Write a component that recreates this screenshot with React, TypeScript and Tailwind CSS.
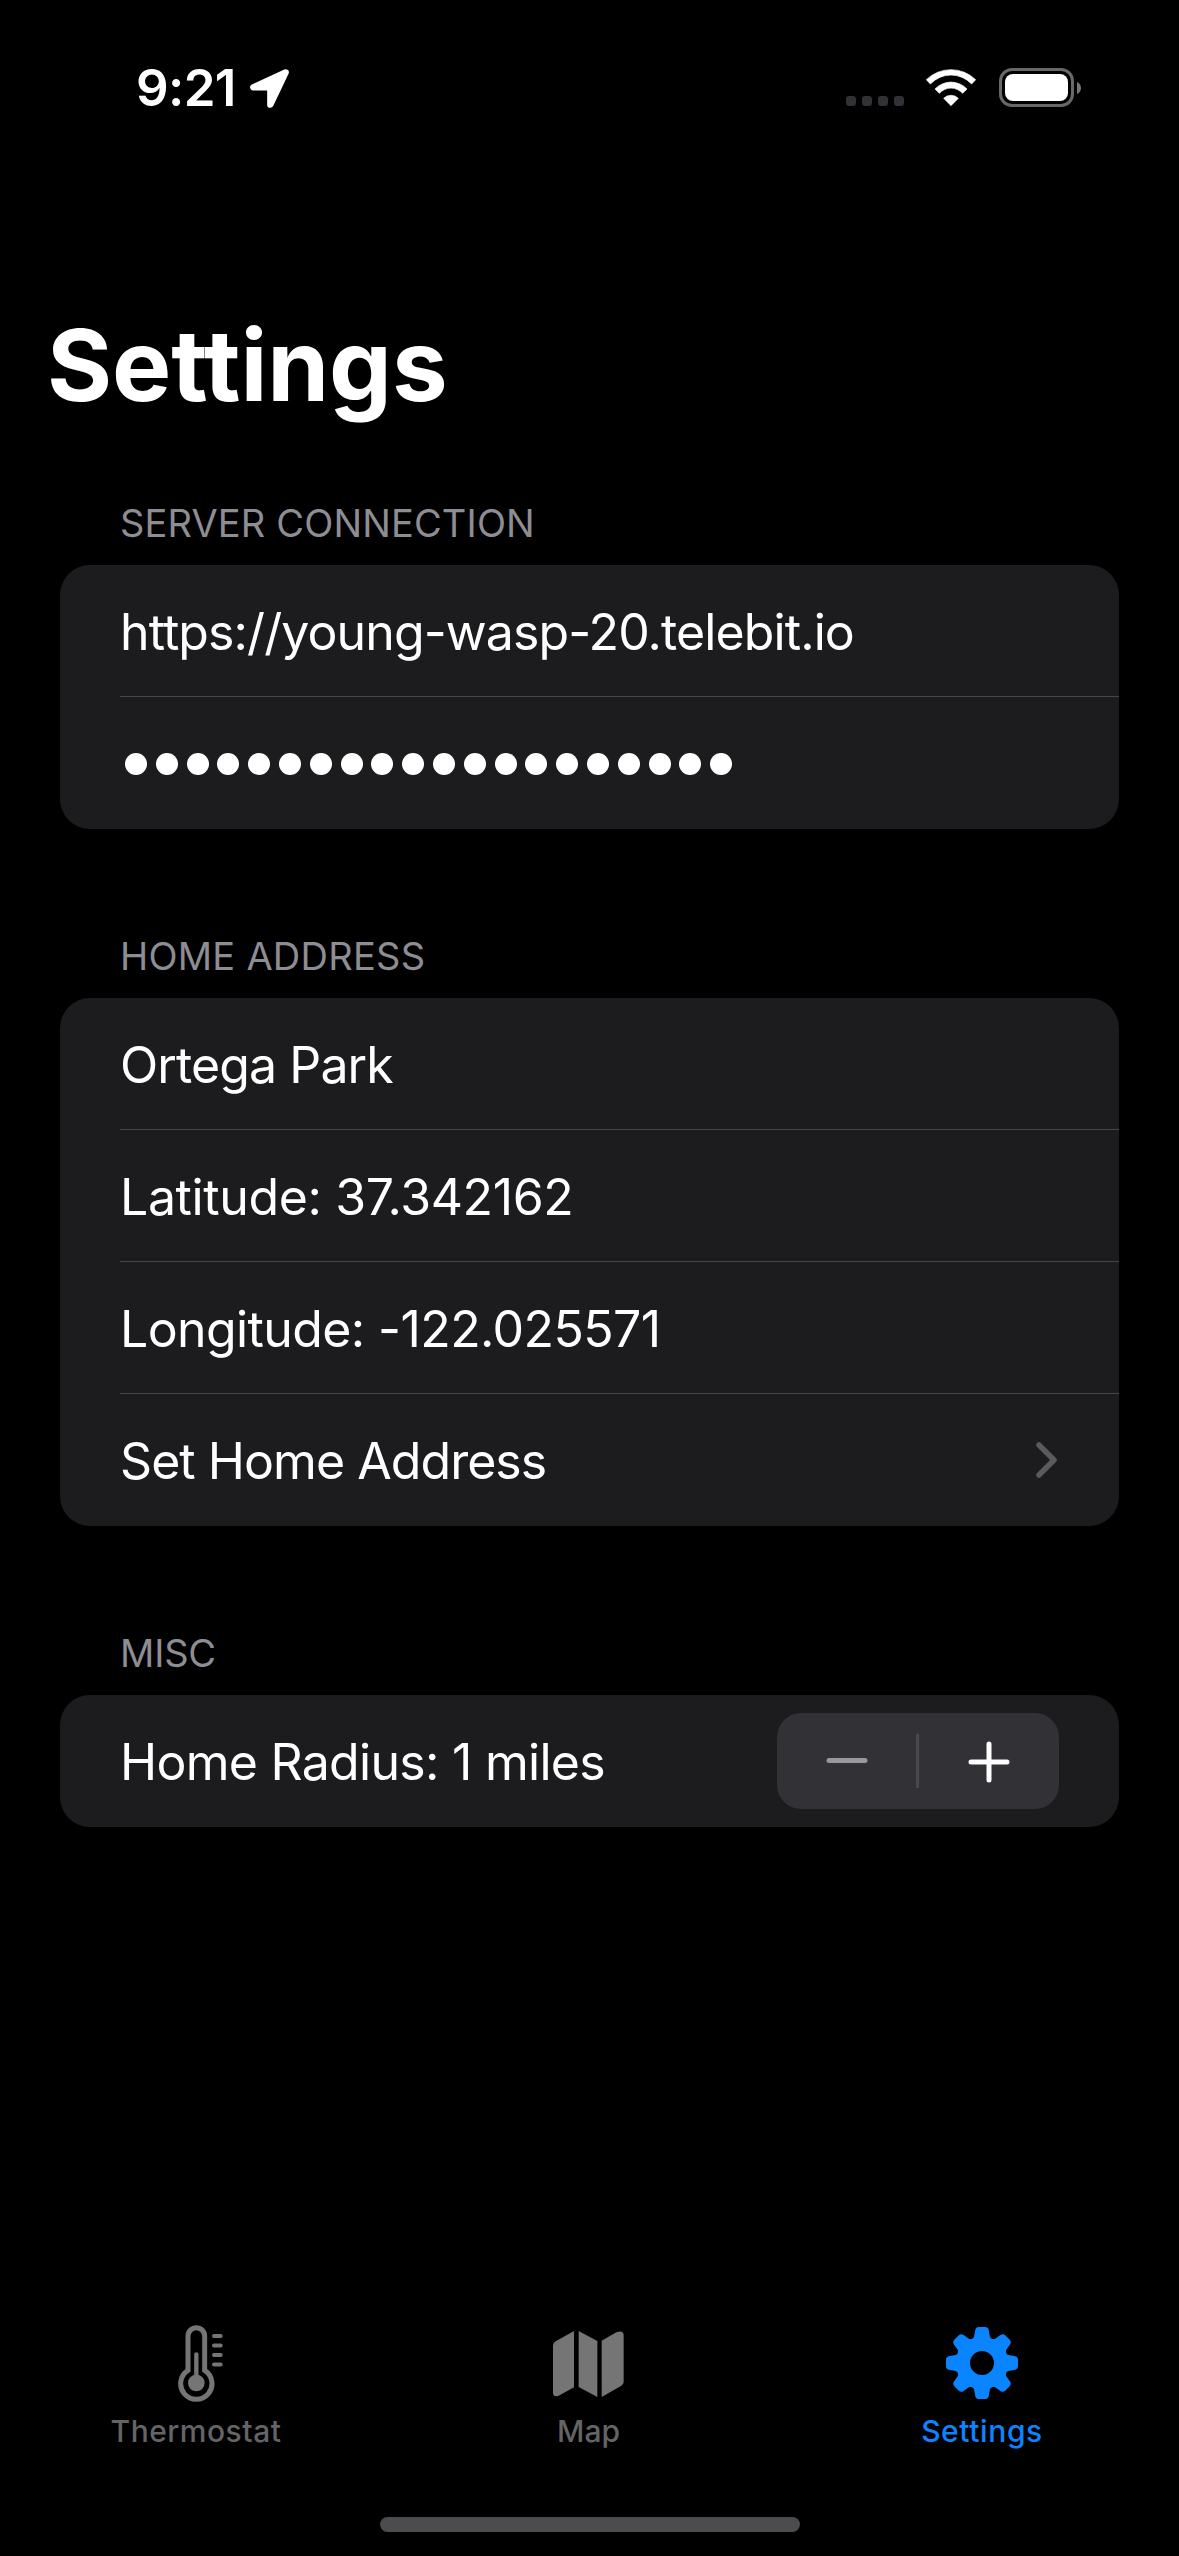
import type { ReactNode } from "react";

function LocationArrow() {
  return (
    <svg viewBox="0 0 117 117" className="ml-[14px] h-[39px] w-[39px] shrink-0">
      <path d="M107 10 L10 55 H61 V107 Z" fill="#fff" stroke="#fff" strokeWidth="19" strokeLinejoin="round" />
    </svg>
  );
}

function WifiIcon() {
  return (
    <svg viewBox="0 0 150 111" className="h-[37px] w-[50px]" fill="#fff" stroke="#fff" strokeWidth="2" strokeLinejoin="round">
      <path d="M1 32 A106 106 0 0 1 149 32 L137 45 A85 85 0 0 0 13 45 Z" />
      <path d="M27 60 A66 66 0 0 1 123 60 L110 73 A47 47 0 0 0 40 73 Z" />
      <path d="M53 88 A31 31 0 0 1 97 88 L75 110 Z" />
    </svg>
  );
}

function Battery() {
  return (
    <div className="flex items-center">
      <div className="h-[39px] w-[75px] rounded-[13px] border-[3px] border-[#68686b] p-[3px]">
        <div className="h-full w-full rounded-[8px] bg-white" />
      </div>
      <svg viewBox="0 0 4 12" className="ml-[3px] h-[12px] w-[4px]">
        <path d="M0 0 C5.3 2 5.3 10 0 12 Z" fill="#77777a" />
      </svg>
    </div>
  );
}

function StatusBar() {
  return (
    <div className="flex h-[176px] items-start">
      <div className="ml-[136px] mt-[57px] flex h-[62px] items-center">
        <span className="text-[51px] font-semibold leading-[62px] tracking-[-0.6px]">9:21</span>
        <LocationArrow />
      </div>
      <div className="ml-auto mr-[98px] mt-[68px] flex h-[39px] items-center">
        <div className="mr-[22px] mt-[27px] flex gap-[6px]">
          {[0, 1, 2, 3].map((i) => (
            <span key={i} className="h-[10px] w-[10px] rounded-[3px] bg-[#313136]" />
          ))}
        </div>
        <WifiIcon />
        <div className="ml-[23px]">
          <Battery />
        </div>
      </div>
    </div>
  );
}

function Section({ title, className, children }: { title: ReactNode; className: string; children: ReactNode }) {
  return (
    <section className={className}>
      <h2 className="mb-[19px] ml-[60px] h-[46px] text-[38px] leading-[46px] text-[#8d8d93]">{title}</h2>
      <div className="overflow-hidden rounded-[30px] bg-[#1c1c1e]">{children}</div>
    </section>
  );
}

function Row({ children, last = false }: { children: ReactNode; last?: boolean }) {
  return (
    <div className="h-[132px] pl-[60px]">
      <div
        className={
          last
            ? "flex h-full items-center pr-[60px] text-[50px] leading-[60px]"
            : "flex h-full items-center border-b border-[#47474a] pr-[60px] text-[50px] leading-[60px]"
        }
      >
        {children}
      </div>
    </div>
  );
}

function PasswordDots() {
  return (
    <div className="ml-[5px] mt-[2px] flex gap-[8.8px]">
      {Array.from({ length: 20 }, (_, i) => (
        <span key={i} className="h-[22px] w-[22px] rounded-full bg-white" />
      ))}
    </div>
  );
}

function Stepper() {
  return (
    <div className="ml-auto flex h-[96px] w-[282px] items-center rounded-[24px] bg-[#313136]">
      <button className="flex h-full w-[139px] items-center justify-center">
        <svg viewBox="0 0 42 42" className="h-[42px] w-[42px]">
          <path d="M3 20.5 H39" stroke="#98989f" strokeWidth="5" strokeLinecap="round" />
        </svg>
      </button>
      <span className="h-[54px] w-[3px] bg-[#4a4a4d]" />
      <button className="flex h-full flex-1 items-center justify-center">
        <svg viewBox="0 0 42 42" className="mt-px h-[42px] w-[42px]">
          <path d="M3 21 H39 M21 3 V39" stroke="#fff" strokeWidth="5" strokeLinecap="round" />
        </svg>
      </button>
    </div>
  );
}

function ThermometerIcon() {
  return (
    <svg viewBox="0 0 135 231" className="ml-[9px] h-[77px] w-[45px]" fill="none" stroke="#757575">
      <path d="M30 136 V33 A25 25 0 0 1 80 33 V136 A47 47 0 1 1 30 136 Z" strokeWidth="15" />
      <path d="M55 88 V174" strokeWidth="13" strokeLinecap="round" />
      <circle cx="55" cy="174" r="25" fill="#757575" stroke="none" />
      <path d="M108 33 H128 M108 61.500 H128 M108 90 H128 M108 118.500 H128" strokeWidth="12" strokeLinecap="round" />
    </svg>
  );
}

function MapIcon() {
  return (
    <svg viewBox="0 0 213 198" className="mt-[2px] h-[66px] w-[71px]" fill="#757575">
      <path d="M63 0 V169 L17 194 Q0 200 0 184 V43 Q0 35 8 31 Z" />
      <path d="M77 0 L133 30 V198 L77 168 Z" />
      <path d="M146 29 L190 4 Q212 -4 212 14 V152 Q212 160 204 165 L146 198 Z" />
    </svg>
  );
}

function GearIcon() {
  return (
    <svg viewBox="-36 -36 72 72" className="h-[72px] w-[72px]" fill="#0b84ff">
      <circle r="19" fill="none" stroke="#0b84ff" strokeWidth="14" />
      {[0, 45, 90, 135, 180, 225, 270, 315].map((angle) => (
        <path
          key={angle}
          transform={`rotate(${angle})`}
          d="M-11 -22 L-9.800 -24.300 Q-8.200 -25 -7.900 -26.500 L-6.700 -33.200 Q-6 -36 -3.200 -36 H3.200 Q6 -36 6.700 -33.200 L7.900 -26.500 Q8.200 -25 9.800 -24.300 L11 -22 Z"
        />
      ))}
    </svg>
  );
}

function Tab({ icon, label, className }: { icon: ReactNode; label: ReactNode; className: string }) {
  return (
    <button className={className}>
      <span className="flex h-[88px] items-center justify-center">{icon}</span>
      <span className="mt-[6px] block text-[30px] font-medium leading-[36px]">{label}</span>
    </button>
  );
}

export default function App() {
  return (
    <div className="flex h-[2556px] w-[1179px] flex-col overflow-hidden bg-black font-['Inter',sans-serif] text-white">
      <StatusBar />
      <h1 className="ml-[47px] mt-[129px] h-[120px] text-[99.5px] font-bold leading-[120px] tracking-[-0.1px]">Settings</h1>

      <main className="mx-[60px] mt-[75px]">
        <Section title={<span className="tracking-[0.15px]">SERVER CONNECTION</span>} className="h-[329px]">
          <Row>
            <span className="pt-[2px] tracking-[-0.9px]">https://young-wasp-20.telebit.io</span>
          </Row>
          <Row last>
            <PasswordDots />
          </Row>
        </Section>

        <Section title={<span className="tracking-[0.25px]">HOME ADDRESS</span>} className="mt-[104px]">
          <Row>
            <span className="pt-[2px] tracking-[-0.9px]">Ortega Park</span>
          </Row>
          <Row>
            <span className="pt-[2px] tracking-[-0.37px]">Latitude: 37.342162</span>
          </Row>
          <Row>
            <span className="pt-[2px] tracking-[-0.6px]">Longitude: -122.025571</span>
          </Row>
          <Row last>
            <span className="pt-[2px] tracking-[-0.95px]">Set Home Address</span>
            <svg viewBox="0 0 22 36" className="ml-auto mr-px h-[36px] w-[22px]">
              <path d="M3 3 L18 18 L3 33" fill="none" stroke="#5a5a5d" strokeWidth="5.500" strokeLinecap="round" strokeLinejoin="round" />
            </svg>
          </Row>
        </Section>

        <Section title={<span className="tracking-[-0.2px]">MISC</span>} className="mt-[104px]">
          <Row last>
            <span className="pt-[2px] tracking-[-0.72px]">Home Radius: 1 miles</span>
            <Stepper />
          </Row>
        </Section>
      </main>

      <nav className="mt-auto grid h-[198px] grid-cols-[392px_393px_394px]">
        <Tab className="flex flex-col items-center tracking-[0.5px] text-[#646466]" icon={<ThermometerIcon />} label="Thermostat" />
        <Tab className="flex flex-col items-center text-[#646466]" icon={<MapIcon />} label="Map" />
        <Tab className="flex flex-col items-center tracking-[0.6px] text-[#0b84ff]" icon={<GearIcon />} label="Settings" />
      </nav>
      <div className="mb-[24px] ml-[380px] h-[15px] w-[420px] shrink-0 rounded-full bg-[#4c4c4e]" />
    </div>
  );
}
